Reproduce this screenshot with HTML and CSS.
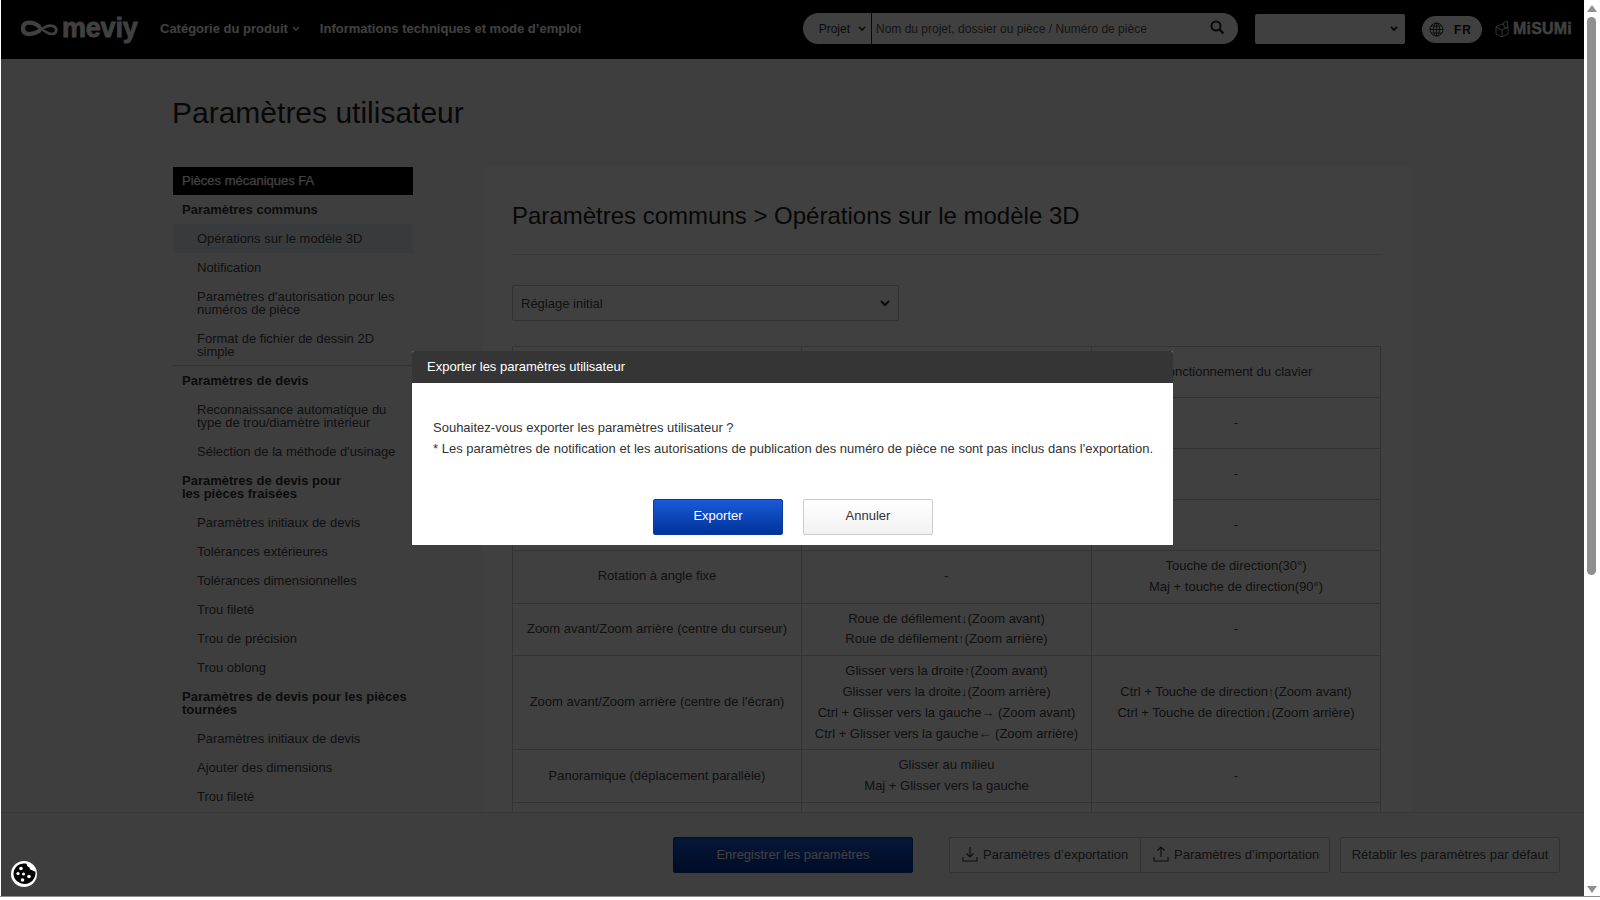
FILE: index.html
```html
<!DOCTYPE html>
<html lang="fr">
<head>
<meta charset="utf-8">
<title>Paramètres utilisateur</title>
<link rel="stylesheet" href="styles.css">
</head>
<body>
<div class="window">
  <div class="app">
    <header class="topbar">
      <div class="logo">
        <svg class="logo-mark" width="40" height="20" viewBox="0 0 40 20" fill="none" stroke="#fff" stroke-linecap="round"><path d="M19 7.500C14 3 3 1 3 9.500C3 17 13 16 19 12" stroke-width="4.400"/><path d="M19 12C24 9 28 5 33 7C38 9 37 15 32 15C27 15 23 11 19 7.500" stroke-width="2.600"/></svg>
        <span class="logo-text">meviy</span>
      </div>
      <nav class="mainnav">
        <a class="navlink">Catégorie du produit<svg width="8" height="6" viewBox="0 0 8 6"><path d="M1 1l3 3 3-3" fill="none" stroke="#fff" stroke-width="1.500"/></svg></a>
        <a class="navlink">Informations techniques et mode d’emploi</a>
      </nav>
      <div class="search">
        <div class="search-scope">Projet <svg width="8" height="6" viewBox="0 0 8 6"><path d="M1 1l3 3 3-3" fill="none" stroke="#222" stroke-width="1.600"/></svg></div>
        <div class="search-input">Nom du projet, dossier ou pièce / Numéro de pièce</div>
        <svg class="search-icon" width="15" height="15" viewBox="0 0 15 15"><circle cx="6" cy="6" r="4.500" fill="none" stroke="#222" stroke-width="2"/><path d="M9.500 9.500l4 4" stroke="#222" stroke-width="2.400"/></svg>
      </div>
      <div class="account"><svg width="8" height="6" viewBox="0 0 8 6"><path d="M1 1l3 3 3-3" fill="none" stroke="#222" stroke-width="1.800"/></svg></div>
      <div class="lang">
        <svg width="15" height="15" viewBox="0 0 15 15" fill="none" stroke="#222" stroke-width=".9"><circle cx="7.500" cy="7.500" r="6.500"/><ellipse cx="7.500" cy="7.500" rx="3" ry="6.500"/><path d="M7.500 1v13M1 7.500h13M2 4h11M2 11h11"/></svg>
        <span>FR</span>
      </div>
      <div class="misumi">
        <svg width="14" height="18" viewBox="0 0 14 18" fill="none" stroke="#fff" stroke-width=".8"><path d="M1 7l6 3v7l-6-3zM7 10l6-3v7l-6 3M1 7l5-3 2 1M8 3l4-2 1 6-3 1.500z"/></svg>
        <span>MiSUMi</span>
      </div>
    </header>

    <div class="content">
      <h1 class="page-title">Paramètres utilisateur</h1>
      <div class="columns">
        <aside class="sidebar">
          <div class="side-banner">Pièces mécaniques FA</div>
          <div class="side-head">Paramètres communs</div>
          <div class="side-item is-active">Opérations sur le modèle 3D</div>
          <div class="side-item">Notification</div>
          <div class="side-item">Paramètres d'autorisation pour les numéros de pièce</div>
          <div class="side-item side-last">Format de fichier de dessin 2D simple</div>
          <div class="side-head">Paramètres de devis</div>
          <div class="side-item">Reconnaissance automatique du type de trou/diamètre intérieur</div>
          <div class="side-item">Sélection de la méthode d'usinage</div>
          <div class="side-head">Paramètres de devis pour<br>les pièces fraisées</div>
          <div class="side-item">Paramètres initiaux de devis</div>
          <div class="side-item">Tolérances extérieures</div>
          <div class="side-item">Tolérances dimensionnelles</div>
          <div class="side-item">Trou fileté</div>
          <div class="side-item">Trou de précision</div>
          <div class="side-item">Trou oblong</div>
          <div class="side-head">Paramètres de devis pour les pièces tournées</div>
          <div class="side-item">Paramètres initiaux de devis</div>
          <div class="side-item">Ajouter des dimensions</div>
          <div class="side-item">Trou fileté</div>
        </aside>
        <main class="panel">
          <h2 class="panel-title">Paramètres communs &gt; Opérations sur le modèle 3D</h2>
          <div class="preset">
            <span>Réglage initial</span>
            <svg width="10" height="7" viewBox="0 0 10 7"><path d="M1 1l4 4 4-4" fill="none" stroke="#222" stroke-width="2"/></svg>
          </div>
          <table class="ops">
            <colgroup><col class="c1"><col class="c2"><col class="c3"></colgroup>
            <tr class="h51"><td></td><td></td><td>Fonctionnement du clavier</td></tr>
            <tr class="h51"><td></td><td></td><td>-</td></tr>
            <tr class="h51"><td></td><td></td><td>-</td></tr>
            <tr class="h51"><td></td><td></td><td>-</td></tr>
            <tr><td>Rotation à angle fixe</td><td>-</td><td>Touche de direction(30°)<br>Maj + touche de direction(90°)</td></tr>
            <tr><td>Zoom avant/Zoom arrière (centre du curseur)</td><td>Roue de défilement↓(Zoom avant)<br>Roue de défilement↑(Zoom arrière)</td><td>-</td></tr>
            <tr><td>Zoom avant/Zoom arrière (centre de l'écran)</td><td>Glisser vers la droite↑(Zoom avant)<br>Glisser vers la droite↓(Zoom arrière)<br>Ctrl + Glisser vers la gauche→ (Zoom avant)<br>Ctrl + Glisser vers la gauche← (Zoom arrière)</td><td>Ctrl + Touche de direction↑(Zoom avant)<br>Ctrl + Touche de direction↓(Zoom arrière)</td></tr>
            <tr><td>Panoramique (déplacement parallèle)</td><td>Glisser au milieu<br>Maj + Glisser vers la gauche</td><td>-</td></tr>
            <tr class="h51"><td></td><td></td><td></td></tr>
          </table>
        </main>
      </div>
    </div>

    <footer class="actions">
      <button class="btn-primary btn-save">Enregistrer les paramètres</button>
      <div class="btn-group">
        <button class="btn-plain btn-export"><svg width="16" height="16" viewBox="0 0 16 16" fill="none" stroke="#333" stroke-width="1.100"><path d="M8 1v10M4.500 7.500L8 11l3.500-3.500M1 11v4h14v-4"/></svg>Paramètres d’exportation</button>
        <button class="btn-plain btn-import"><svg width="16" height="16" viewBox="0 0 16 16" fill="none" stroke="#333" stroke-width="1.100"><path d="M8 11V1M4.500 4.500L8 1l3.500 3.500M1 11v4h14v-4"/></svg>Paramètres d’importation</button>
      </div>
      <button class="btn-plain btn-reset">Rétablir les paramètres par défaut</button>
    </footer>

    <div class="overlay"></div>

    <div class="modal" role="dialog">
      <div class="modal-head">Exporter les paramètres utilisateur</div>
      <div class="modal-body">
        <p>Souhaitez-vous exporter les paramètres utilisateur ?</p>
        <p>* Les paramètres de notification et les autorisations de publication des numéro de pièce ne sont pas inclus dans l'exportation.</p>
      </div>
      <div class="modal-foot">
        <button class="btn-primary btn-modal">Exporter</button>
        <button class="btn-light btn-modal">Annuler</button>
      </div>
    </div>

    <div class="cookie">
      <svg width="26" height="26" viewBox="0 0 26 26"><path d="M13 2.500c1 0 2 .1 2.800.4 0 1.800 1 3 2.600 3.300.1 1.700 1.400 3 3 3.100.7.900 2.100 1.300 2.900 1.100.1.500.2 1.100.2 1.600 0 5.800-4.700 11-10.500 11S2.500 18.800 2.500 13 7.200 2.500 13 2.500z" fill="#000"/><circle cx="10" cy="7.500" r="1.800" fill="#fff"/><circle cx="7" cy="12.500" r="1.600" fill="#fff"/><circle cx="12.500" cy="13" r="1.500" fill="#fff"/><circle cx="18" cy="15.500" r="1.800" fill="#fff"/><circle cx="11.500" cy="19" r="1.800" fill="#fff"/></svg>
    </div>
  </div>
  <div class="scrollbar">
    <div class="sb-arrow sb-up"></div>
    <div class="sb-thumb"></div>
    <div class="sb-arrow sb-down"></div>
  </div>
</div>
</body>
</html>
```

FILE: styles.css
```css
* { box-sizing: border-box; }
html, body { margin: 0; height: 100%; overflow: hidden; background: #fff; }
body { font-family: "Liberation Sans", Arial, sans-serif; color: #333; }

.window { display: flex; width: 1600px; height: 897px; padding-left: 1px; border-bottom: 1px solid #8c8c8c; }
.app { position: relative; flex: none; width: 1583px; height: 896px; display: flex; flex-direction: column; overflow: hidden; background: #f8f8f8; }

/* Top bar */
.topbar { flex: none; height: 59px; background: #000; display: flex; align-items: center; color: #fff; padding: 0 0 2px 19px; }
.logo { display: flex; align-items: center; width: 140px; }
.logo-mark { margin-right: 2px; }
.logo-text { font-size: 27px; font-weight: 700; line-height: 30px; letter-spacing: -.2px; -webkit-text-stroke: .8px #fff; position: relative; top: -1px; }
.mainnav { display: flex; gap: 20px; width: 643px; }
.navlink { font-size: 13px; font-weight: 700; color: #fff; display: flex; align-items: center; gap: 4px; white-space: pre; }
.search { position: relative; width: 435px; height: 31px; background: #fff; border-radius: 16px; display: flex; align-items: center; font-size: 12px; color: #333; }
.search-scope { width: 69px; height: 31px; display: flex; align-items: center; justify-content: flex-end; gap: 8px; padding-right: 5px; border-right: 1px solid #222; }
.search-input { padding-left: 4px; color: #555; }
.search-icon { position: absolute; right: 13px; top: 7px; }
.account { width: 150px; height: 30px; margin-left: 17px; background: #fff; border-radius: 2px; display: flex; align-items: center; justify-content: flex-end; padding-right: 7px; }
.lang { width: 60px; height: 27px; margin: 2px 0 0 17px; background: #fff; border-radius: 14px; display: flex; align-items: center; gap: 10px; padding-left: 7px; color: #111; font-size: 12px; font-weight: 700; letter-spacing: 1px; }
.misumi { display: flex; align-items: center; gap: 4px; margin-left: 13px; font-size: 16px; font-weight: 700; letter-spacing: .2px; -webkit-text-stroke: .4px #fff; color: #fff; }

/* Content */
.content { flex: 1; min-height: 0; overflow: hidden; padding: 0 0 0 172px; }
.page-title { margin: 0 0 0 -1px; padding-top: 36px; height: 108px; font-size: 30px; line-height: 36px; font-weight: 400; color: #222; }
.columns { display: flex; gap: 69px; align-items: flex-start; }

.sidebar { flex: none; width: 240px; font-size: 13px; line-height: 13px; color: #444; }
.side-banner { height: 28px; line-height: 28px; padding-left: 9px; background: #000; color: #fff; -webkit-text-stroke: .25px #fff; }
.side-head { padding: 8px 0 8px 9px; font-weight: 700; color: #333; }
.side-item { padding: 8px 9px 8px 24px; }
.side-item.is-active { background: #dcebf7; }
.side-last { padding-bottom: 7px; border-bottom: 1px solid #ccc; }

.panel { flex: none; width: 930px; height: 800px; background: #fff; padding: 0 31px 0 30px; }
.panel-title { margin: 0; padding-top: 34px; height: 88px; border-bottom: 1px solid #ddd; font-size: 24px; line-height: 30px; font-weight: 400; color: #222; }
.preset { margin-top: 30px; width: 387px; height: 36px; border: 1px solid #ccc; border-radius: 2px; display: flex; align-items: center; justify-content: space-between; padding: 0 8px; font-size: 13px; color: #444; }
.ops { margin-top: 25px; width: 100%; table-layout: fixed; border-collapse: collapse; font-size: 13px; line-height: 20.800px; color: #444; text-align: center; }
.ops td { border: 1px solid #ccc; padding: 5px 6px; }
.ops .c1 { width: 289px; }
.ops .c2 { width: 290px; }
.ops .c3 { width: 289px; }
.h51 td { height: 51px; }

/* Footer */
.actions { position: relative; flex: none; height: 84px; background: #f8f8f8; border-top: 1px solid #e0e0e0; display: flex; align-items: flex-start; justify-content: flex-end; padding: 24px 24px 0 0; }
button { font-family: inherit; cursor: pointer; }
.btn-primary { color: #fff; border: 1px solid #0a3aa0; border-radius: 2px; background: linear-gradient(#1a5ad8, #003399); }
.btn-save { width: 240px; height: 36px; margin-right: 36px; padding-bottom: 3px; font-size: 13px; }
.btn-plain { height: 36px; padding: 0 0 2px 12px; border: 1px solid #ccc; border-radius: 2px; background: #fff; color: #444; font-size: 13px; display: flex; align-items: center; gap: 5px; white-space: nowrap; }
.btn-group { display: flex; margin-right: 10px; }
.btn-export { width: 191px; border-right: 0; border-radius: 2px 0 0 2px; }
.btn-import { width: 190px; border-radius: 0 2px 2px 0; }
.btn-reset { width: 220px; padding: 0 0 2px; justify-content: center; }

/* Modal layer */
.overlay { position: absolute; inset: 0; background: rgba(0, 0, 0, .75); }
.modal { position: absolute; left: 411px; top: 351px; width: 761px; height: 194px; background: #fff; border-radius: 2px 2px 0 0; }
.modal-head { height: 32px; line-height: 32px; padding-left: 15px; background: #353535; color: #fff; font-size: 13px; border-radius: 2px 2px 0 0; }
.modal-body { padding: 34px 20px 0 21px; height: 116px; font-size: 13px; color: #333; }
.modal-body p { margin: 0; line-height: 21px; white-space: nowrap; }
.modal-foot { display: flex; justify-content: center; gap: 20px; padding-left: 1px; }
.btn-modal { width: 130px; height: 36px; padding-bottom: 4px; font-size: 13px; }
.btn-light { border: 1px solid #ccc; border-radius: 2px; background: linear-gradient(#fff, #f2f2f2); color: #333; }

.cookie { position: absolute; left: 10px; bottom: 9px; width: 26px; height: 26px; border-radius: 50%; background: #fff; }
.cookie svg { display: block; }

/* Window scrollbar */
.scrollbar { position: relative; flex: none; width: 15px; background: #fff; }
.sb-thumb { position: absolute; left: 3px; top: 17px; width: 9px; height: 558px; border-radius: 5px; background: #8f8f8f; }
.sb-arrow { position: absolute; left: 3px; width: 0; height: 0; border-left: 5px solid transparent; border-right: 5px solid transparent; }
.sb-up { top: 5px; border-bottom: 7px solid #8f8f8f; }
.sb-down { bottom: 3px; border-top: 7px solid #8f8f8f; }
```
